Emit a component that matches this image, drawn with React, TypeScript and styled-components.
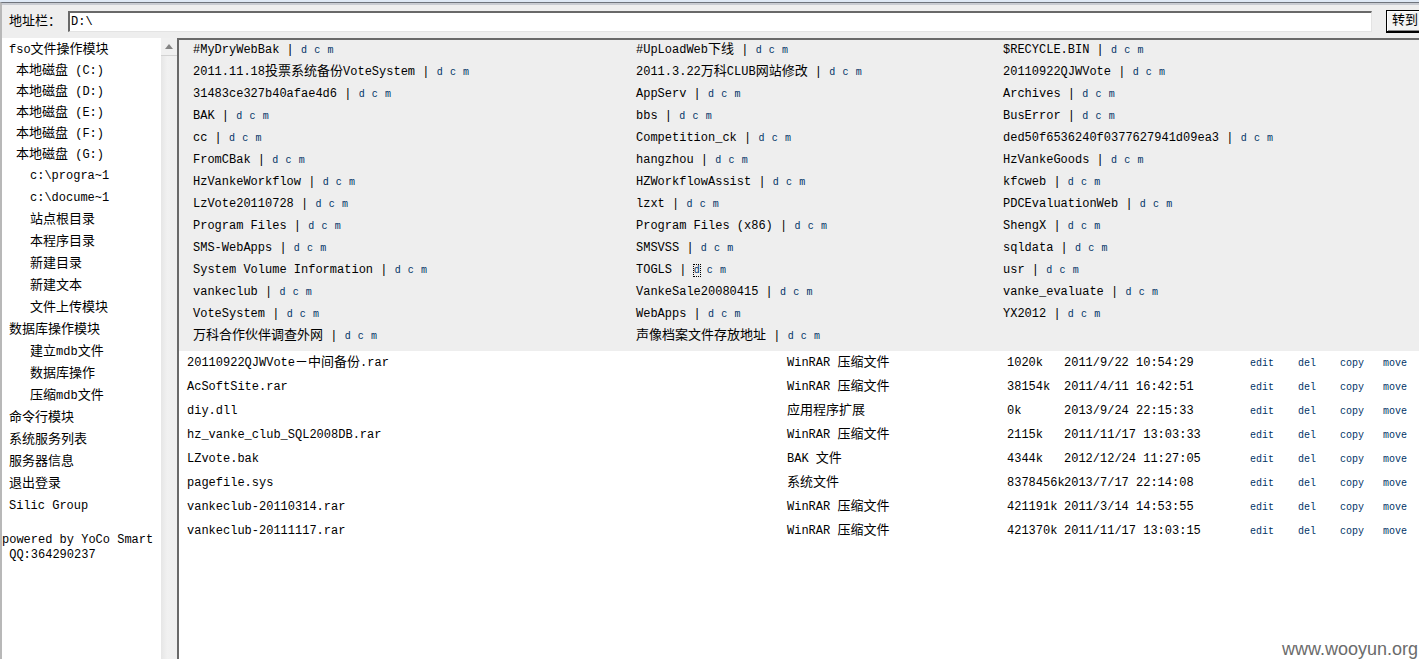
import React from "react";
import styled, { createGlobalStyle } from "styled-components";

const GlobalStyle = createGlobalStyle`
  * { box-sizing: border-box; }
  body {
    margin: 0;
    background: #eeeeee;
    color: #000;
    font-family: "Liberation Mono", "Noto Sans CJK SC", monospace;
    font-size: 12px;
  }
`;

const Page = styled.div`
  position: relative;
  display: flex;
  flex-direction: column;
  min-height: 100vh;
  overflow: hidden;
  border-top: 2px solid #dfe9f5;
`;

const Toolbar = styled.form`
  display: flex;
  align-items: center;
  height: 36px;
  padding-left: 7px;
  border-top: 1px solid #6f747c;
  border-left: 2px solid #b8b8b8;
  box-shadow: inset 0 2px 0 #c9ccd2;
  overflow: hidden;
`;

const AddressLabel = styled.label`
  flex: none;
  width: 59px;
  padding-bottom: 2px;
  font-size: 13px;
  white-space: nowrap;
`;

const AddressInput = styled.input`
  flex: 1;
  min-width: 0;
  height: 21px;
  margin-top: 2px;
  padding: 0 1px;
  border: 1px solid #e3e3e3;
  border-top: 2px solid #696969;
  border-left: 2px solid #696969;
  background: #fff;
  color: #000;
  font: inherit;
  outline: none;
`;

const GoButton = styled.button`
  flex: none;
  width: 42px;
  height: 23px;
  margin: 2px -9px 0 14px;
  padding: 0 0 1px 5px;
  border: 1px solid #000;
  border-bottom-width: 2px;
  border-radius: 0;
  background: #f3f3f3;
  box-shadow: inset 1px 1px 0 #fff, inset 0 -1px 0 #8c8c8c;
  color: #000;
  font-family: inherit;
  font-size: 13px;
  line-height: 16px;
  text-align: left;
`;

const Body = styled.div`
  display: flex;
  flex: 1;
`;

const Sidebar = styled.nav`
  flex: none;
  width: 161px;
  border-left: 2px solid #b8b8b8;
  background: #fff;
`;

const MenuList = styled.ul`
  margin: 0;
  padding: 2px 0 0;
  list-style: none;
`;

const indents = { root: 7, disk: 14, child: 28 };
const rowHeights = { root: 22, disk: 21, child: 22 };
type Level = keyof typeof indents;

const MenuItem = styled.li<{ $level: Level }>`
  height: ${(p) => rowHeights[p.$level]}px;
  padding-left: ${(p) => indents[p.$level]}px;
  line-height: ${(p) => rowHeights[p.$level]}px;
  white-space: nowrap;

  &:first-child {
    height: 20px;
    line-height: 20px;
  }
`;

const MenuLink = styled.a`
  color: #000;
  text-decoration: none;
`;

const Credits = styled.p`
  margin: 16px 0 0;
  line-height: 15px;
  white-space: pre;
`;

const ScrollTrack = styled.div`
  flex: none;
  width: 16px;
  background: linear-gradient(to right, #e6e6e6, #f1f1f1 40%, #efefef);
`;

const ScrollButton = styled.button`
  display: flex;
  align-items: center;
  justify-content: center;
  width: 16px;
  height: 18px;
  padding: 0;
  border: 0;
  border-bottom: 1px solid #d2d2d2;
  background: #f0f0f0;
`;

const Main = styled.main`
  flex: 1;
  min-width: 0;
  border-top: 2px solid #696969;
  border-left: 2px solid #696969;
  background: #fff;
`;

const FolderGrid = styled.ul`
  display: grid;
  grid-template-columns: 443fr 367fr 416fr;
  margin: 0;
  padding: 0 0 3px 14px;
  background: #eeeeee;
  list-style: none;
`;

const FolderItem = styled.li`
  height: 22px;
  line-height: 20px;
  white-space: nowrap;
`;

const ActionLink = styled.a<{ $focused?: boolean }>`
  color: #003366;
  font-size: 10px;
  text-decoration: none;
  outline: ${(p) => (p.$focused ? "1px dotted #000" : "none")};
`;

const FileTable = styled.table`
  width: 100%;
  table-layout: fixed;
  border-collapse: collapse;
`;

const FileRow = styled.tr`
  height: 24px;
`;

const Cell = styled.td`
  padding: 0;
  line-height: 22px;
  white-space: nowrap;

  &:first-child {
    padding-left: 8px;
  }
`;

const Column = styled.col<{ $share: number }>`
  width: ${(p) => (p.$share / 1240) * 100}%;
`;

const Ideographs = styled.span`
  font-size: 13px;
`;

const Watermark = styled.div`
  position: absolute;
  right: 1px;
  bottom: 0;
  color: #6b6b6b;
  font-family: "Liberation Sans", Arial, sans-serif;
  font-size: 18px;
  line-height: 20px;
`;

/* Latin runs keep the base size; Chinese runs are one step larger. */
function Mixed({ text }: { text: string }) {
  const runs = text.split(/([\u3000-\u9fff\uff00-\uffef]+)/).filter(Boolean);
  return (
    <>
      {runs.map((run, i) =>
        /[\u3000-\u9fff\uff00-\uffef]/.test(run) ? (
          <Ideographs key={i}>{run}</Ideographs>
        ) : (
          <React.Fragment key={i}>{run}</React.Fragment>
        )
      )}
    </>
  );
}

const menu: [Level, string][] = [
  ["root", "fso文件操作模块"],
  ["disk", "本地磁盘 (C:)"],
  ["disk", "本地磁盘 (D:)"],
  ["disk", "本地磁盘 (E:)"],
  ["disk", "本地磁盘 (F:)"],
  ["disk", "本地磁盘 (G:)"],
  ["child", "c:\\progra~1"],
  ["child", "c:\\docume~1"],
  ["child", "站点根目录"],
  ["child", "本程序目录"],
  ["child", "新建目录"],
  ["child", "新建文本"],
  ["child", "文件上传模块"],
  ["root", "数据库操作模块"],
  ["child", "建立mdb文件"],
  ["child", "数据库操作"],
  ["child", "压缩mdb文件"],
  ["root", "命令行模块"],
  ["root", "系统服务列表"],
  ["root", "服务器信息"],
  ["root", "退出登录"],
  ["root", "Silic Group"],
];

const folders = [
  "#MyDryWebBak", "#UpLoadWeb下线", "$RECYCLE.BIN",
  "2011.11.18投票系统备份VoteSystem", "2011.3.22万科CLUB网站修改", "20110922QJWVote",
  "31483ce327b40afae4d6", "AppServ", "Archives",
  "BAK", "bbs", "BusError",
  "cc", "Competition_ck", "ded50f6536240f0377627941d09ea3",
  "FromCBak", "hangzhou", "HzVankeGoods",
  "HzVankeWorkflow", "HZWorkflowAssist", "kfcweb",
  "LzVote20110728", "lzxt", "PDCEvaluationWeb",
  "Program Files", "Program Files (x86)", "ShengX",
  "SMS-WebApps", "SMSVSS", "sqldata",
  "System Volume Information", "TOGLS", "usr",
  "vankeclub", "VankeSale20080415", "vanke_evaluate",
  "VoteSystem", "WebApps", "YX2012",
  "万科合作伙伴调查外网", "声像档案文件存放地址",
];

const focusedFolder = "TOGLS";

const files = [
  ["20110922QJWVote－中间备份.rar", "WinRAR 压缩文件", "1020k", "2011/9/22 10:54:29"],
  ["AcSoftSite.rar", "WinRAR 压缩文件", "38154k", "2011/4/11 16:42:51"],
  ["diy.dll", "应用程序扩展", "0k", "2013/9/24 22:15:33"],
  ["hz_vanke_club_SQL2008DB.rar", "WinRAR 压缩文件", "2115k", "2011/11/17 13:03:33"],
  ["LZvote.bak", "BAK 文件", "4344k", "2012/12/24 11:27:05"],
  ["pagefile.sys", "系统文件", "8378456k", "2013/7/17 22:14:08"],
  ["vankeclub-20110314.rar", "WinRAR 压缩文件", "421191k", "2011/3/14 14:53:55"],
  ["vankeclub-20111117.rar", "WinRAR 压缩文件", "421370k", "2011/11/17 13:03:15"],
];

const columnShares = [608, 220, 57, 186, 48, 42, 43, 36];
const fileActions = ["edit", "del", "copy", "move"];

function Folder({ name }: { name: string }) {
  return (
    <FolderItem>
      <Mixed text={name} />
      {" | "}
      <ActionLink href="#" $focused={name === focusedFolder}>d</ActionLink>{" "}
      <ActionLink href="#">c</ActionLink>{" "}
      <ActionLink href="#">m</ActionLink>
    </FolderItem>
  );
}

export default function App() {
  return (
    <>
      <GlobalStyle />
      <Page>
        <Toolbar onSubmit={(e) => e.preventDefault()}>
          <AddressLabel htmlFor="address">地址栏：</AddressLabel>
          <AddressInput id="address" type="text" defaultValue={"D:\\"} />
          <GoButton type="submit">转到</GoButton>
        </Toolbar>
        <Body>
          <Sidebar>
            <MenuList>
              {menu.map(([level, label]) => (
                <MenuItem key={label} $level={level}>
                  <MenuLink href="#"><Mixed text={label} /></MenuLink>
                </MenuItem>
              ))}
            </MenuList>
            <Credits>{"powered by YoCo Smart\n QQ:364290237"}</Credits>
          </Sidebar>
          <ScrollTrack>
            <ScrollButton type="button" aria-label="Scroll up">
              <svg width="8" height="5" viewBox="0 0 8 5">
                <path d="M4 0 L8 5 H0 Z" fill="#858585" />
              </svg>
            </ScrollButton>
          </ScrollTrack>
          <Main>
            <FolderGrid>
              {folders.map((name) => <Folder key={name} name={name} />)}
            </FolderGrid>
            <FileTable>
              <colgroup>
                {columnShares.map((share, i) => <Column key={i} $share={share} />)}
              </colgroup>
              <tbody>
                {files.map((file) => (
                  <FileRow key={file[0]}>
                    {file.map((value, i) => (
                      <Cell key={i}><Mixed text={value} /></Cell>
                    ))}
                    {fileActions.map((action) => (
                      <Cell key={action}><ActionLink href="#">{action}</ActionLink></Cell>
                    ))}
                  </FileRow>
                ))}
              </tbody>
            </FileTable>
          </Main>
        </Body>
        <Watermark>www.wooyun.org</Watermark>
      </Page>
    </>
  );
}
